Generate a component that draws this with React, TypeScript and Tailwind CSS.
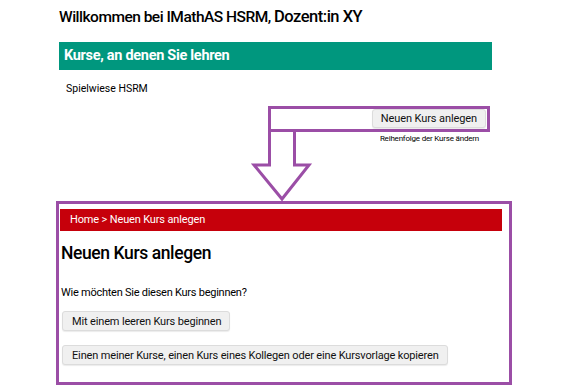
import React from "react";

const font = { fontFamily: "Roboto, 'Liberation Sans', sans-serif" };

function GrayButton({ children, className }: { children: React.ReactNode; className?: string }) {
  return (
    <button
      className={
        "flex items-center rounded-[3px] border border-[#dcdcdc] bg-[#f0f0f0] text-[11px] leading-none text-[#111] shadow-[0_1px_1px_rgba(0,0,0,0.08)] " +
        (className ?? "")
      }
    >
      {children}
    </button>
  );
}

export default function App() {
  return (
    <div
      className="relative h-[391px] w-[587px] overflow-hidden bg-white text-black"
      style={font}
    >
      {/* course list section */}
      <div className="pl-[59px] pt-[6px]">
        <h1 className="h-[22px] text-[15.5px] font-medium leading-[22px] tracking-[-0.5px]">
          Willkommen bei IMathAS HSRM, <span className="text-[16.5px]">Dozent:in XY</span>
        </h1>
        <div className="mt-[14px] flex h-[28px] w-[433px] items-center bg-[#00977e] px-[5px]">
          <span className="text-[14.5px] font-bold tracking-[-0.3px] text-white">
            Kurse, an denen Sie lehren
          </span>
        </div>
        <p className="mt-[12px] h-[14px] pl-[7px] text-[10.5px] leading-[14px]">Spielwiese HSRM</p>
        <div className="flex w-[431px] flex-col items-end">
          <div className="mt-[10px] flex h-[26px] w-[222px] justify-end border-[3px] border-[#9b4ea6] pr-[1px]">
            <GrayButton className="h-[19px] px-[8px] tracking-[-0.1px]">Neuen Kurs anlegen</GrayButton>
          </div>
          <p className="mr-[11px] mt-[2px] text-[8px] leading-[10px] tracking-[-0.2px]">
            Reihenfolge der Kurse ändern
          </p>
        </div>
      </div>

      {/* new course page */}
      <div className="ml-[56px] mt-[57px] h-[184px] w-[456px] border-[3px] border-[#9b4ea6] pl-[1px] pt-[5px]">
        <div className="flex h-[22px] w-[442px] items-center bg-[#c6000b] pl-[10px] text-[11px] tracking-[-0.15px] text-white">
          Home &gt; Neuen Kurs anlegen
        </div>
        <h2 className="mt-[10px] pl-[1px] text-[17.5px] font-medium leading-[24px] tracking-[-0.4px]">
          Neuen Kurs anlegen
        </h2>
        <p className="mt-[21px] pl-[1px] text-[11px] leading-[14px] tracking-[-0.25px]">
          Wie möchten Sie diesen Kurs beginnen?
        </p>
        <div className="mt-[11px] flex flex-col items-start gap-[14px] pl-[2px]">
          <GrayButton className="h-[20px] pl-[9px] pr-[8px] tracking-[-0.15px]">
            Mit einem leeren Kurs beginnen
          </GrayButton>
          <GrayButton className="h-[20px] pl-[9px] pr-[8px] tracking-[-0.15px]">
            Einen meiner Kurse, einen Kurs eines Kollegen oder eine Kursvorlage kopieren
          </GrayButton>
        </div>
      </div>

      {/* annotation arrow */}
      <svg
        className="pointer-events-none absolute left-0 top-0"
        width="587"
        height="391"
        viewBox="0 0 587 391"
      >
        <path
          d="M269.5 131 L269.5 165 L254 165 L282 199 L309 165 L294.5 165 L294.5 131"
          fill="none"
          stroke="#9b4ea6"
          strokeWidth="3"
          strokeLinejoin="miter"
        />
      </svg>
    </div>
  );
}
